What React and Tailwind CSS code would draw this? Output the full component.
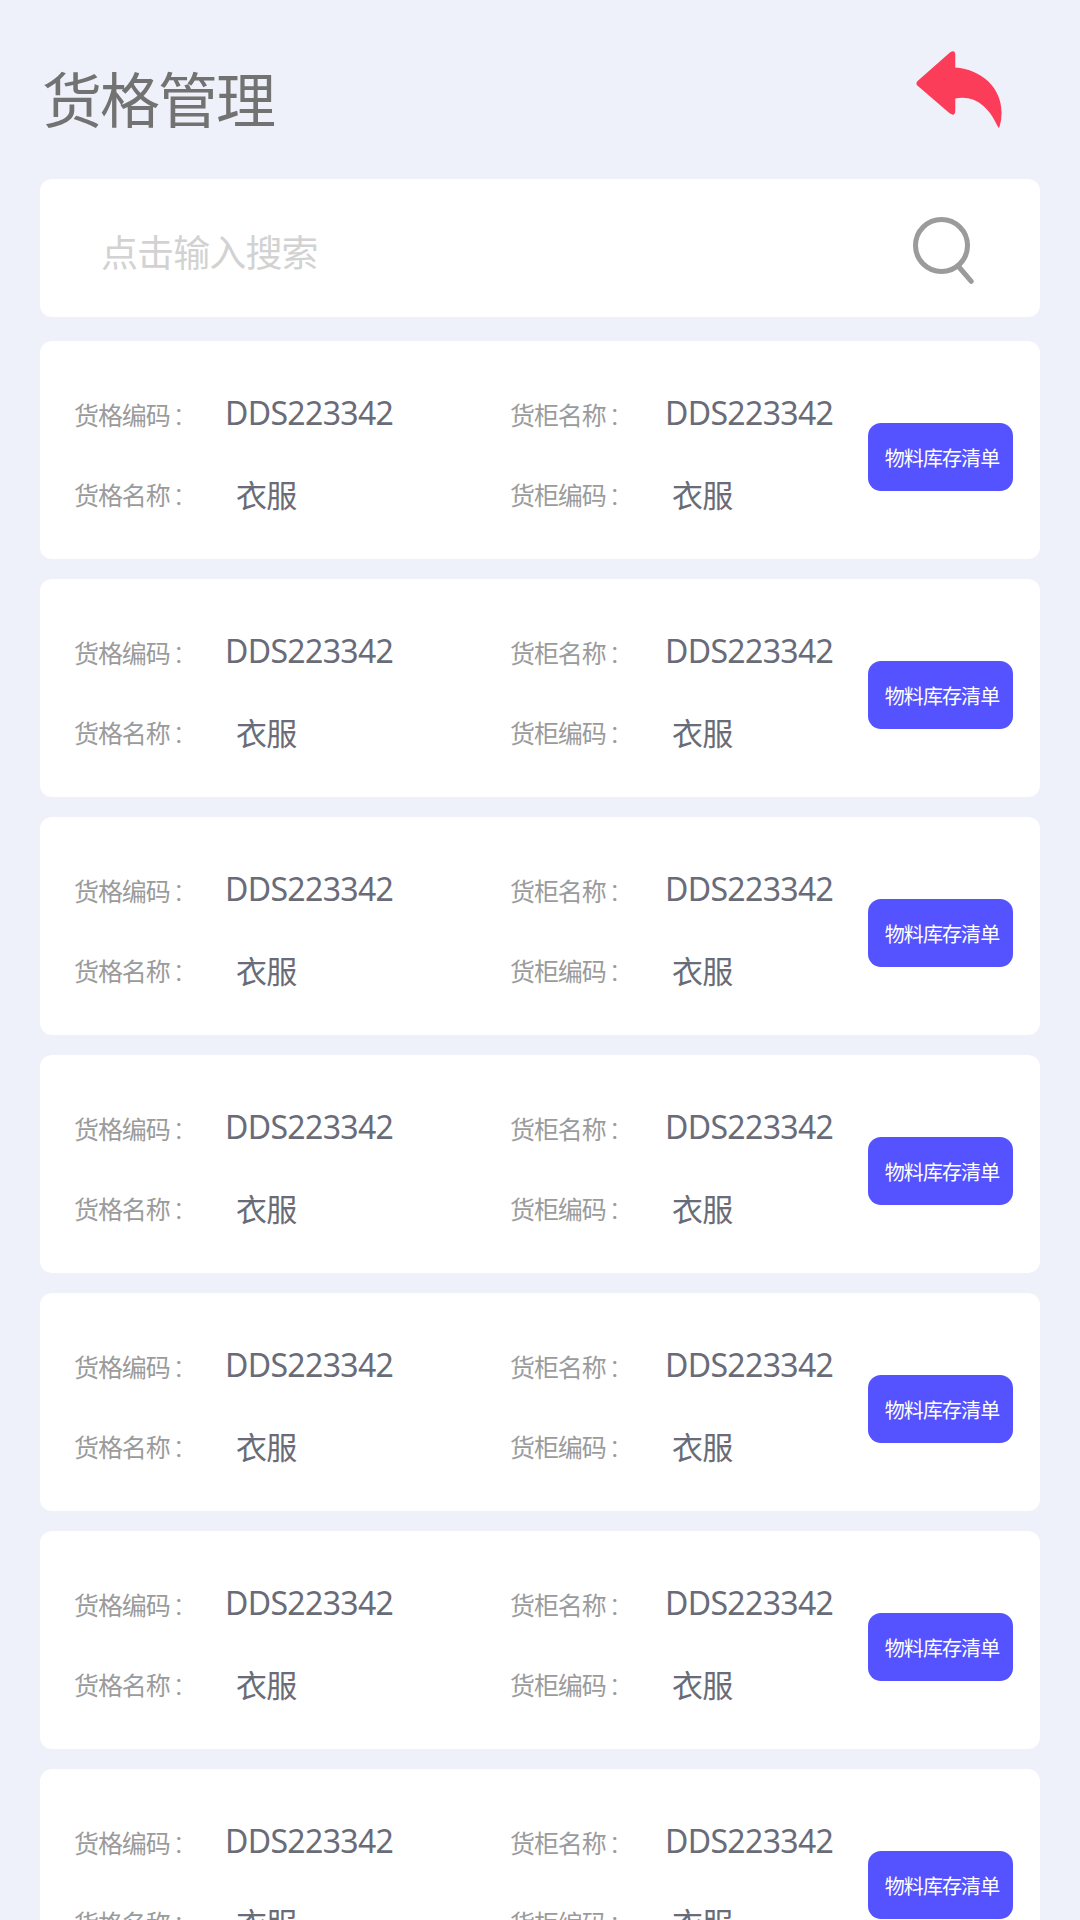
const slots = Array.from({ length: 7 }, (_, id) => ({
  id,
  slotCode: "DDS223342",
  slotName: "衣服",
  cabinetName: "DDS223342",
  cabinetCode: "衣服",
}));

function BackIcon() {
  return (
    <svg className="h-[80px] w-[88px]" viewBox="0 0 88 80" fill="#fc3d5a">
      <path d="M1.6 30 L34.2 1.3 Q39.3 -1.5 39.3 4 V16.6 C66 18.6 85.6 37 85.6 62 Q85.6 69 83.6 75.5 Q82.8 78 81.8 75.5 C73 56 59 43.5 39.3 47.4 V59.5 Q39.3 66 33.6 62.3 L1.6 34.8 Q-.8 32.4 1.6 30 Z" />
    </svg>
  );
}

function SearchIcon() {
  return (
    <svg className="h-[70px] w-[64px]" viewBox="0 0 64 70" fill="none" stroke="#9b9b9b" strokeWidth="5">
      <circle cx="28.5" cy="28.5" r="26" />
      <path d="M45.5 49.5 L58.3 64.3" strokeLinecap="round" />
    </svg>
  );
}

function Label({ children }) {
  return (
    <span className="block pt-px text-[25px] leading-[30px] tracking-[-1.1px] whitespace-nowrap text-[#9b9b9b]">
      {children}
      <span className="ml-[3px] font-light">：</span>
    </span>
  );
}

function Code({ children }) {
  return (
    <span className="block text-[32px] leading-[30px] tracking-[-0.65px] whitespace-nowrap text-[#696c78]">
      {children}
    </span>
  );
}

function Name({ children }) {
  return (
    <span className="block pt-px text-[31px] leading-[30px] tracking-[-0.7px] whitespace-nowrap text-[#696c78]">
      {children}
    </span>
  );
}

function SlotCard({ slot }) {
  return (
    <section className="flex h-[218px] shrink-0 rounded-xl bg-white pl-[34px]">
      <div className="grid h-min grid-cols-[151px_285px_155px_203px] gap-y-[49px] pt-[58px]">
        <Label>货格编码</Label>
        <div className="-mt-px"><Code>{slot.slotCode}</Code></div>
        <Label>货柜名称</Label>
        <div className="-mt-px"><Code>{slot.cabinetName}</Code></div>
        <Label>货格名称</Label>
        <div className="pl-[11px]"><Name>{slot.slotName}</Name></div>
        <Label>货柜编码</Label>
        <div className="pl-[7px]"><Name>{slot.cabinetCode}</Name></div>
      </div>
      <button className="mt-[82px] flex h-[68px] w-[145px] items-center justify-center rounded-[13px] bg-[#5553ff] pt-[3px] pl-[3px] text-[20px] leading-[28px] tracking-[-0.9px] whitespace-nowrap text-white">
        物料库存清单
      </button>
    </section>
  );
}

export default function App() {
  return (
    <main className="flex h-[1920px] w-[1080px] flex-col overflow-hidden bg-[#eef1f9] px-10 font-['Noto_Sans','Noto_Sans_CJK_SC',sans-serif]">
      <header className="flex h-[179px] shrink-0 justify-between pt-[51px] pr-[36px] pl-[2px]">
        <h1 className="mt-[9px] h-[80px] text-[60px] leading-[80px] tracking-[-2px] text-[#727272]">货格管理</h1>
        <button className="h-[80px]" aria-label="返回"><BackIcon /></button>
      </header>
      <div className="mb-6 flex h-[138px] shrink-0 justify-between rounded-xl bg-white pt-[38px] pr-[63px] pl-[61px]">
        <input
          className="h-[70px] w-[600px] bg-transparent text-[37px] leading-[50px] tracking-[-0.9px] outline-none placeholder:text-[#d2d2d2]"
          placeholder="点击输入搜索"
        />
        <button className="h-[70px]" aria-label="搜索"><SearchIcon /></button>
      </div>
      <div className="flex flex-col gap-5">
        {slots.map((slot) => <SlotCard key={slot.id} slot={slot} />)}
      </div>
    </main>
  );
}
